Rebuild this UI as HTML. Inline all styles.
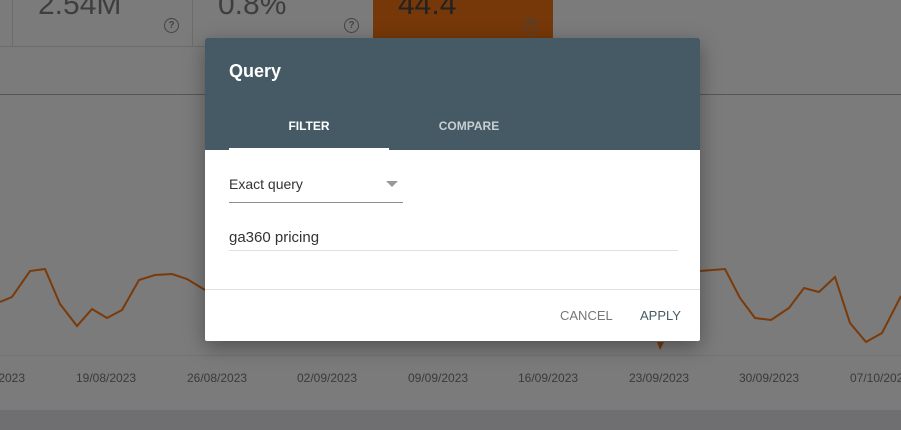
<!DOCTYPE html>
<html><head><style>
body{margin:0;width:901px;height:430px;overflow:hidden;background:#7b7b7b;font-family:"Liberation Sans",Arial,sans-serif;position:relative}
.abs{position:absolute}
.num{font-size:30px;color:#3e3e3e;top:-12px}
.q{width:13px;height:13px;border:1.5px solid #444;border-radius:50%;font-size:10px;color:#444;text-align:center;line-height:13px;font-weight:bold}
.date{top:371px;font-size:12px;color:#3a3a3a}
</style></head><body>
<div class="abs" style="left:0;top:410px;width:901px;height:20px;background:#6f6f72"></div>
<div class="abs" style="left:12px;top:0;width:1px;height:46px;background:#6c6c6c"></div>
<div class="abs" style="left:192px;top:0;width:1px;height:46px;background:#6c6c6c"></div>
<div class="abs" style="left:0;top:46px;width:373px;height:1px;background:#6c6c6c"></div>
<div class="abs" style="left:373px;top:0;width:180px;height:38px;background:#763808"></div>
<div class="abs num" style="left:38px">2.54M</div>
<div class="abs num" style="left:218px">0.8%</div>
<div class="abs num" style="left:398px;color:#222">44.4</div>
<div class="abs q" style="left:164px;top:18px">?</div>
<div class="abs q" style="left:344px;top:18px">?</div>
<div class="abs q" style="left:523px;top:18px">?</div>
<div class="abs" style="left:0;top:94px;width:901px;height:1px;background:#5a5555"></div>
<div class="abs" style="left:0;top:355px;width:901px;height:1px;background:#727272"></div>
<svg class="abs" style="left:0;top:0" width="901" height="430"><polyline fill="none" stroke="#7a3a0a" stroke-width="2" points="0,302 12,297 30,271 45,269 60,304 77,326 92,309 107,318 122,310 139,280 155,275 172,274 187,279 205,290"/><polyline fill="none" stroke="#7a3a0a" stroke-width="2" points="700,271 725,269 740,298 755,318 771,320 789,308 804,288 819,292 835,277 850,323 866,342 882,333 901,296"/><path d="M657,342 L664,342 L660,350Z" fill="#7a3a0a"/></svg>
<div class="abs date" style="left:-5px">/2023</div>
<div class="abs date" style="left:76px">19/08/2023</div>
<div class="abs date" style="left:187px">26/08/2023</div>
<div class="abs date" style="left:297px">02/09/2023</div>
<div class="abs date" style="left:408px">09/09/2023</div>
<div class="abs date" style="left:518px">16/09/2023</div>
<div class="abs date" style="left:629px">23/09/2023</div>
<div class="abs date" style="left:739px">30/09/2023</div>
<div class="abs date" style="left:850px">07/10/2023</div>
<div class="abs" style="left:205px;top:38px;width:495px;height:303px;background:#fff;box-shadow:0 6px 20px rgba(0,0,0,.35);border-radius:2px;overflow:hidden">
 <div style="height:112px;background:#455a64;position:relative">
  <div class="abs" style="left:24px;top:23px;color:#fff;font-size:18px;font-weight:bold">Query</div>
  <div class="abs" style="left:24px;top:81px;width:160px;text-align:center;color:#fff;font-size:12px;font-weight:bold">FILTER</div>
  <div class="abs" style="left:184px;top:81px;width:160px;text-align:center;color:#c7cfd3;font-size:12px;font-weight:bold">COMPARE</div>
  <div class="abs" style="left:24px;top:110px;width:160px;height:2px;background:#fff"></div>
 </div>
 <div class="abs" style="left:24px;top:138px;font-size:14px;color:#333">Exact query</div>
 <div class="abs" style="left:181px;top:143px;width:0;height:0;border-left:6px solid transparent;border-right:6px solid transparent;border-top:6px solid #999"></div>
 <div class="abs" style="left:24px;top:164px;width:174px;height:1px;background:#8e8e8e"></div>
 <div class="abs" style="left:24px;top:191px;font-size:15px;color:#333">ga360 pricing</div>
 <div class="abs" style="left:24px;top:212px;width:449px;height:1px;background:#e0e0e0"></div>
 <div class="abs" style="left:0;top:251px;width:495px;height:1px;background:#e0e0e0"></div>
 <div class="abs" style="left:355px;top:270px;font-size:13px;color:#777">CANCEL</div>
 <div class="abs" style="left:435px;top:270px;font-size:13px;color:#455a64">APPLY</div>
</div>
</body></html>
